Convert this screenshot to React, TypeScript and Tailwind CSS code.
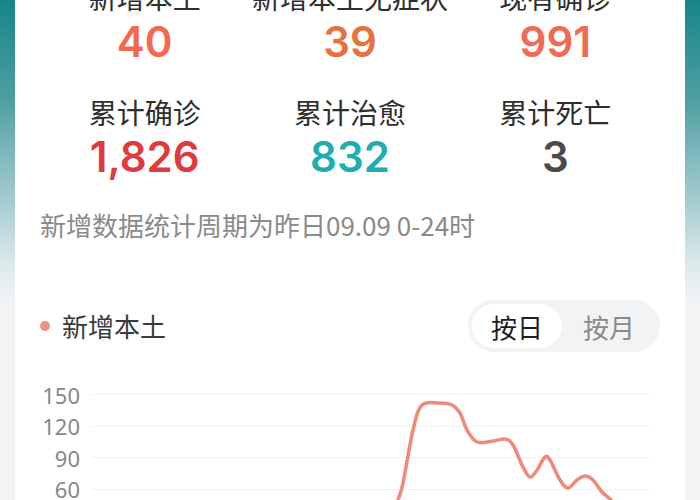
import React from 'react';

// stat cells (first row is cut off at the top of the shot)
const stats = [
  { label: '新增本土', value: '40', color: 'text-[#f3684f]' },
  { label: '新增本土无症状', value: '39', color: 'text-[#e8703f]' },
  { label: '现有确诊', value: '991', color: 'text-[#f06a55]' },
  { label: '累计确诊', value: '1,826', color: 'text-[#e0393e]' },
  { label: '累计治愈', value: '832', color: 'text-[#20adb0]' },
  { label: '累计死亡', value: '3', color: 'text-[#4a4a4a]' },
];

const yTicks = ['150', '120', '90', '60', '30'];

// curve points in chart-local coords
const pts: [number, number][] = [
  [352, 140], [358, 121], [363, 104], [373, 51], [382, 26], [400, 24], [412, 26], [420, 34],
  [427, 51], [437, 63], [453, 62], [465, 60], [473, 66], [483, 88], [490, 98],
  [497, 91], [505, 78], [510, 81], [520, 101], [528, 109], [537, 101], [545, 97],
  [553, 101], [562, 113], [570, 120], [582, 134],
];

const smoothPath = (p: [number, number][]) => {
  let d = `M${p[0][0]},${p[0][1]}`;
  for (let i = 0; i < p.length - 1; i++) {
    const p0 = p[i - 1] || p[i];
    const p1 = p[i];
    const p2 = p[i + 1];
    const p3 = p[i + 2] || p2;
    const c1x = p1[0] + (p2[0] - p0[0]) / 6;
    const c1y = p1[1] + (p2[1] - p0[1]) / 6;
    const c2x = p2[0] - (p3[0] - p1[0]) / 6;
    const c2y = p2[1] - (p3[1] - p1[1]) / 6;
    d += ` C${c1x},${c1y} ${c2x},${c2y} ${p2[0]},${p2[1]}`;
  }
  return d;
};

const StatCell = ({ label, value, color }: { label: string; value: string; color: string }) => (
  <div className="flex flex-col items-center">
    <div className="text-[28px] leading-[28px] text-[#2e2e2e] whitespace-nowrap">{label}</div>
    <div
      className={`mt-[10px] text-[42px] leading-[42px] font-semibold ${color}`}
      style={{ fontFamily: 'Inter, "Noto Sans", sans-serif' }}
    >
      {value}
    </div>
  </div>
);

export default function App() {
  return (
    <div
      className="w-[700px] h-[500px] overflow-hidden px-[15px] bg-[linear-gradient(180deg,#16868a_0%,#4f9fa2_20%,#a4ccd0_40%,#dde9eb_53%,#f1f3f5_60%,#f1f3f5_100%)]"
      style={{ fontFamily: '"Noto Sans CJK SC", "Noto Sans", sans-serif' }}
    >
      <div className="bg-white h-full px-[25px] flex flex-col">
        {/* stats */}
        <div className="grid grid-cols-3 gap-y-[35px] -mt-[17px] px-[2px]">
          {stats.map((s) => (
            <StatCell key={s.label} {...s} />
          ))}
        </div>

        <div className="mt-[34px] text-[26px] leading-[26px] text-[#8a8a8a] whitespace-nowrap">
          新增数据统计周期为昨日09.09 0-24时
        </div>

        {/* legend + toggle */}
        <div className="mt-[62px] flex items-center justify-between">
          <div className="flex items-center">
            <span className="w-[10px] h-[10px] rounded-full bg-[#f58f80] mr-[12px]" />
            <span className="text-[26px] leading-[26px] text-[#3a3a3a]">新增本土</span>
          </div>
          <div className="flex items-center h-[52px] rounded-full bg-[#f2f3f5] p-[4px]">
            <div className="h-full w-[90px] rounded-full bg-white flex items-center justify-center text-[26px] text-[#1e1e1e]">
              按日
            </div>
            <div className="h-full w-[94px] flex items-center justify-center text-[26px] text-[#8a8a8a]">
              按月
            </div>
          </div>
        </div>

        {/* chart */}
        <div className="relative mt-[27px]">
          {yTicks.map((t) => (
            <div key={t} className="flex items-center h-[31.5px]">
              <div
                className="w-[40px] text-right text-[22px] leading-none text-[#888888]"
                style={{ fontFamily: '"Noto Sans", sans-serif' }}
              >
                {t}
              </div>
              <div className="ml-[12px] flex-1 mr-[10px] h-px bg-[#f1f1f1]" />
            </div>
          ))}
          <svg className="absolute inset-0 w-full h-full overflow-visible" fill="none">
            <path d={smoothPath(pts)} stroke="#ef897b" strokeWidth="3.5" strokeLinecap="round" strokeLinejoin="round" />
          </svg>
        </div>
      </div>
    </div>
  );
}
